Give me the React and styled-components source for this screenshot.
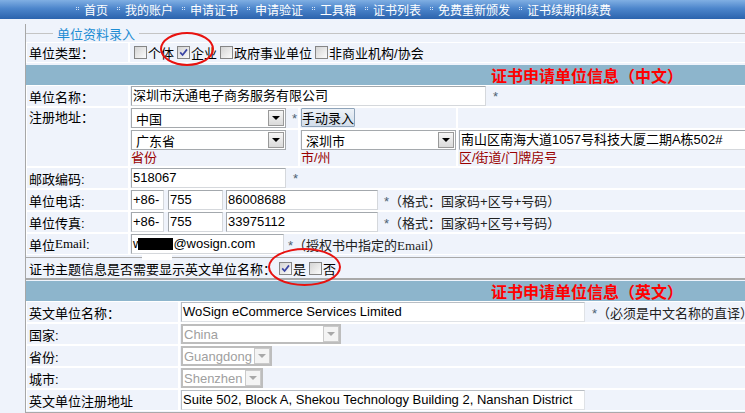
import React from 'react'
import styled, { createGlobalStyle, css } from 'styled-components'

const GlobalStyle = createGlobalStyle`
  html, body {
    margin: 0;
    padding: 0;
    overflow: hidden;
    background: #eff3fb;
  }
  body {
    font-family: "Liberation Sans", "Noto Sans CJK SC", sans-serif;
    font-size: 13px;
    color: #000;
  }
`

const navItems = ['首页', '我的账户', '申请证书', '申请验证', '工具箱', '证书列表', '免费重新颁发', '证书续期和续费']

const Check = ({ checked }) => (
  <Box>
    {checked && (
      <svg width="9" height="9" viewBox="0 0 9 9">
        <path d="M1.2 4.4 L3.6 7 L8 1.4" stroke="#3a44a4" strokeWidth="1.7" fill="none" />
      </svg>
    )}
  </Box>
)

const Select = ({ value, width, disabled }) => (
  <SelectBox $w={width} $disabled={disabled}>
    <SelectText>{value}</SelectText>
    <Arrow $disabled={disabled} />
  </SelectBox>
)

const App = () => (
  <Root>
    <GlobalStyle />
    <Nav>
      {navItems.map(item => (
        <NavItem key={item} href="#">{item}</NavItem>
      ))}
    </Nav>

    <Frame>
      <LegendRow>
        <Legend>单位资料录入</Legend>
      </LegendRow>

      <Row $cols="103px 1fr" $h={20}>
        <Label>单位类型：</Label>
        <Cell>
          <Check /><span>个体</span>
          <Check checked /><span>企业</span>
          <Check /><span>政府事业单位</span>
          <Check /><span>非商业机构/协会</span>
        </Cell>
      </Row>

      <BandLine>
        <BandTitle>证书申请单位信息（中文）</BandTitle>
      </BandLine>

      <Row $cols="103px 1fr">
        <Label>单位名称：</Label>
        <Cell>
          <TextBox $w={355} $mr={7}>深圳市沃通电子商务服务有限公司</TextBox>
          <Star>*</Star>
        </Cell>
      </Row>

      <AddressGrid>
        <Label $top>注册地址：</Label>
        <Cell>
          <Select value="中国" width={155} />
          <Star $ml={6}>*</Star>
        </Cell>
        <Cell>
          <Button type="button">手动录入</Button>
        </Cell>
        <Cell />
        <StackCell>
          <Select value="广东省" width={155} />
          <Note>省份</Note>
        </StackCell>
        <StackCell>
          <Select value="深圳市" width={155} />
          <Note>市/州</Note>
        </StackCell>
        <StackCell>
          <TextBox $w={330}>南山区南海大道1057号科技大厦二期A栋502#</TextBox>
          <Note>区/街道/门牌房号</Note>
        </StackCell>
      </AddressGrid>

      <Row $cols="103px 1fr">
        <Label>邮政编码:</Label>
        <Cell>
          <TextBox $w={155} $mr={7}>518067</TextBox>
          <Star>*</Star>
        </Cell>
      </Row>

      <Row $cols="103px 1fr">
        <Label>单位电话:</Label>
        <Cell>
          <TextBox $w={33} $mr={4}>+86-</TextBox>
          <TextBox $w={55} $mr={3}>755</TextBox>
          <TextBox $w={152} $mr={6}>86008688</TextBox>
          <Hint><Star>*</Star>（格式：国家码+区号+号码）</Hint>
        </Cell>
      </Row>

      <Row $cols="103px 1fr">
        <Label>单位传真:</Label>
        <Cell>
          <TextBox $w={33} $mr={4}>+86-</TextBox>
          <TextBox $w={55} $mr={3}>755</TextBox>
          <TextBox $w={152} $mr={6}>33975112</TextBox>
          <Hint><Star>*</Star>（格式：国家码+区号+号码）</Hint>
        </Cell>
      </Row>

      <Row $cols="103px 1fr">
        <Label>单位<Serif>Email</Serif>:</Label>
        <Cell>
          <TextBox $w={153} $mr={4}>
            w<Redact />@wosign.com
          </TextBox>
          <Hint><Star>*</Star>（授权书中指定的<Serif>Email</Serif>）</Hint>
        </Cell>
      </Row>

      <Question>
        证书主题信息是否需要显示英文单位名称：
        <Check checked /><span>是</span>
        <Check /><span>否</span>
      </Question>

      <BandLine $tight>
        <BandTitle>证书申请单位信息（英文）</BandTitle>
      </BandLine>

      <Row $cols="153px 1fr">
        <Label>英文单位名称：</Label>
        <Cell>
          <TextBox $w={404} $mr={7} $soft>WoSign eCommerce Services Limited</TextBox>
          <Hint><Star>*</Star>（必须是中文名称的直译）</Hint>
        </Cell>
      </Row>
      <Row $cols="153px 1fr">
        <Label>国家:</Label>
        <Cell><Select value="China" width={160} disabled /></Cell>
      </Row>
      <Row $cols="153px 1fr">
        <Label>省份:</Label>
        <Cell><Select value="Guangdong" width={91} disabled /></Cell>
      </Row>
      <Row $cols="153px 1fr">
        <Label>城市:</Label>
        <Cell><Select value="Shenzhen" width={82} disabled /></Cell>
      </Row>
      <Row $cols="153px 1fr">
        <Label>英文单位注册地址</Label>
        <Cell>
          <TextBox $w={404} $soft>Suite 502, Block A, Shekou Technology Building 2, Nanshan District</TextBox>
        </Cell>
      </Row>
      <BottomLine />
    </Frame>

    <Ring $x={160} $y={32} $w={54} $h={34} />
    <Ring $x={268} $y={248} $w={73} $h={38} />
    <Patch />
  </Root>
)

const Root = styled.div`
  position: relative;
  width: 1200px;
`

const Nav = styled.nav`
  display: flex;
  align-items: center;
  gap: 9px;
  height: 19px;
  padding-left: 76px;
  background: linear-gradient(#80afe3, #4c85cb 45%, #2b63ad);
`

const NavItem = styled.a`
  display: flex;
  align-items: center;
  gap: 5px;
  color: #fff;
  font-family: "Noto Sans CJK SC", sans-serif;
  font-size: 12px;
  line-height: 19px;
  text-decoration: none;
  white-space: nowrap;

  &::before {
    content: '';
    width: 1px;
    height: 1px;
    margin-right: 2px;
    background: #d3e2f5;
    box-shadow: 2px 0 #d3e2f5, 0 2px #d3e2f5, 2px 2px #d3e2f5;
    transform: translateY(-2px);
  }
`

const Frame = styled.div`
  margin-left: 25px;
  width: 1122px;
  min-height: 394px;
  border-left: 1px solid #a7a7a7;
`

const LegendRow = styled.div`
  display: flex;
  align-items: center;
  height: 18px;
  margin-top: 5px;

  &::before {
    content: '';
    width: 27px;
    border-top: 1px solid #c4c4c4;
  }
  &::after {
    content: '';
    flex: 1;
    border-top: 1px solid #c4c4c4;
  }
`

const Legend = styled.span`
  padding: 0 4px;
  color: #1d8cd3;
  font-family: "Noto Sans CJK SC", sans-serif;
  font-size: 13px;
`

const Row = styled.div`
  display: grid;
  grid-template-columns: ${p => p.$cols};
  height: ${p => p.$h || 22}px;
`

const Cell = styled.div`
  box-sizing: border-box;
  display: flex;
  align-items: center;
  min-width: 0;
  padding-left: 1px;
  border: 1px solid #fff;
  white-space: nowrap;
`

const Label = styled(Cell)`
  padding-left: 2px;
  ${p => p.$top && css`
    grid-row: span 2;
    align-items: flex-start;
    line-height: 20px;
  `}
`

const StackCell = styled(Cell)`
  flex-direction: column;
  align-items: flex-start;
  justify-content: flex-start;
`

const AddressGrid = styled.div`
  display: grid;
  grid-template-columns: 103px 170px 158px 1fr;
  grid-template-rows: 22px 38px;
`

const BandLine = styled.div`
  border-top: 1px solid #a9a9a9;
  padding-top: ${p => (p.$tight ? 1 : 2)}px;
`

const BandTitle = styled.h2`
  display: flex;
  justify-content: center;
  align-items: center;
  height: 20px;
  margin: 0;
  background: #8db5cc;
  color: #ff0000;
  font-family: "Noto Sans CJK SC", sans-serif;
  font-size: 16px;
  font-weight: bold;
`

const TextBox = styled.div`
  position: relative;
  box-sizing: border-box;
  flex: none;
  width: ${p => p.$w}px;
  height: 20px;
  margin-right: ${p => p.$mr || 0}px;
  padding: 0 1px;
  border: 1px solid;
  border-color: #a3a8ad #d5d8dc #d5d8dc #a3a8ad;
  background: #fff;
  font-size: 13px;
  line-height: 18px;
  white-space: nowrap;
  overflow: hidden;

  ${p => p.$soft && css`
    border-color: #b9bec4 #dfe2e6 #dfe2e6 #b9bec4;
  `}
`

const Redact = styled.span`
  display: inline-block;
  width: 35px;
  height: 12px;
  margin-left: -4px;
  background: #000;
  vertical-align: -2px;
`

const SelectBox = styled.div`
  box-sizing: border-box;
  display: flex;
  align-items: center;
  flex: none;
  width: ${p => p.$w}px;
  height: 20px;
  padding-left: 4px;
  border: 1px solid #a5a9ad;
  background: #fff;
  font-size: 13px;
  color: #000;

  ${p => p.$disabled && css`
    padding-left: 1px;
    border: 2px solid #bdbdbd;
    color: #a0a0a0;
  `}
`

const SelectText = styled.span`
  flex: 1;
  white-space: nowrap;
`

const Arrow = styled.span`
  box-sizing: border-box;
  display: flex;
  align-items: center;
  justify-content: center;
  width: 16px;
  height: 16px;
  margin-right: 1px;
  border: 1px solid #999;
  background: linear-gradient(#f6f6f6, #dadada);

  &::after {
    content: '';
    border-left: 4px solid transparent;
    border-right: 4px solid transparent;
    border-top: 4px solid #000;
  }

  ${p => p.$disabled && css`
    margin-right: 0;
    border-color: #cacaca;
    background: #f4f4f4;
    &::after {
      border-top-color: #a8a8a8;
    }
  `}
`

const Button = styled.button`
  box-sizing: border-box;
  width: 54px;
  height: 19px;
  margin-top: -1px;
  padding: 0;
  border: 1px solid #8ea3b9;
  border-radius: 1px;
  background: linear-gradient(#edf2f8, #d2ddea);
  color: #000;
  font-family: "Noto Sans CJK SC", sans-serif;
  font-size: 13px;
  line-height: 17px;
`

const Star = styled.span`
  margin-left: ${p => p.$ml || 0}px;
  color: #4b6272;
  font-size: 13px;
`

const Hint = styled.span`
  color: #222;
  font-size: 13px;
  white-space: nowrap;
`

const Serif = styled.span`
  font-family: "Liberation Serif", serif;
`

const Note = styled.span`
  color: #990000;
  font-size: 13px;
  line-height: 16px;
`

const Box = styled.span`
  box-sizing: border-box;
  display: inline-flex;
  align-items: center;
  justify-content: center;
  flex: none;
  width: 13px;
  height: 13px;
  margin: 0 1px 0 3px;
  border: 1px solid #858585;
  background: linear-gradient(135deg, #d4d4d4, #fbfbfb);
`

const Question = styled.div`
  display: flex;
  align-items: center;
  height: 20px;
  margin-top: 2px;
  padding-left: 3px;
  border-top: 1px solid #a9a9a9;
  border-bottom: 1px solid #a9a9a9;
  white-space: nowrap;
`

const BottomLine = styled.div`
  margin-top: 1px;
  border-top: 1px solid #a9a9a9;
`

const Ring = styled.div`
  position: absolute;
  left: ${p => p.$x}px;
  top: ${p => p.$y}px;
  box-sizing: border-box;
  width: ${p => p.$w}px;
  height: ${p => p.$h}px;
  border: 2px solid #e8120f;
  border-radius: 50%;
  pointer-events: none;
`

const Patch = styled.div`
  position: absolute;
  left: 142px;
  top: 254px;
  width: 30px;
  height: 6px;
  background: #fff;
`

export default App
